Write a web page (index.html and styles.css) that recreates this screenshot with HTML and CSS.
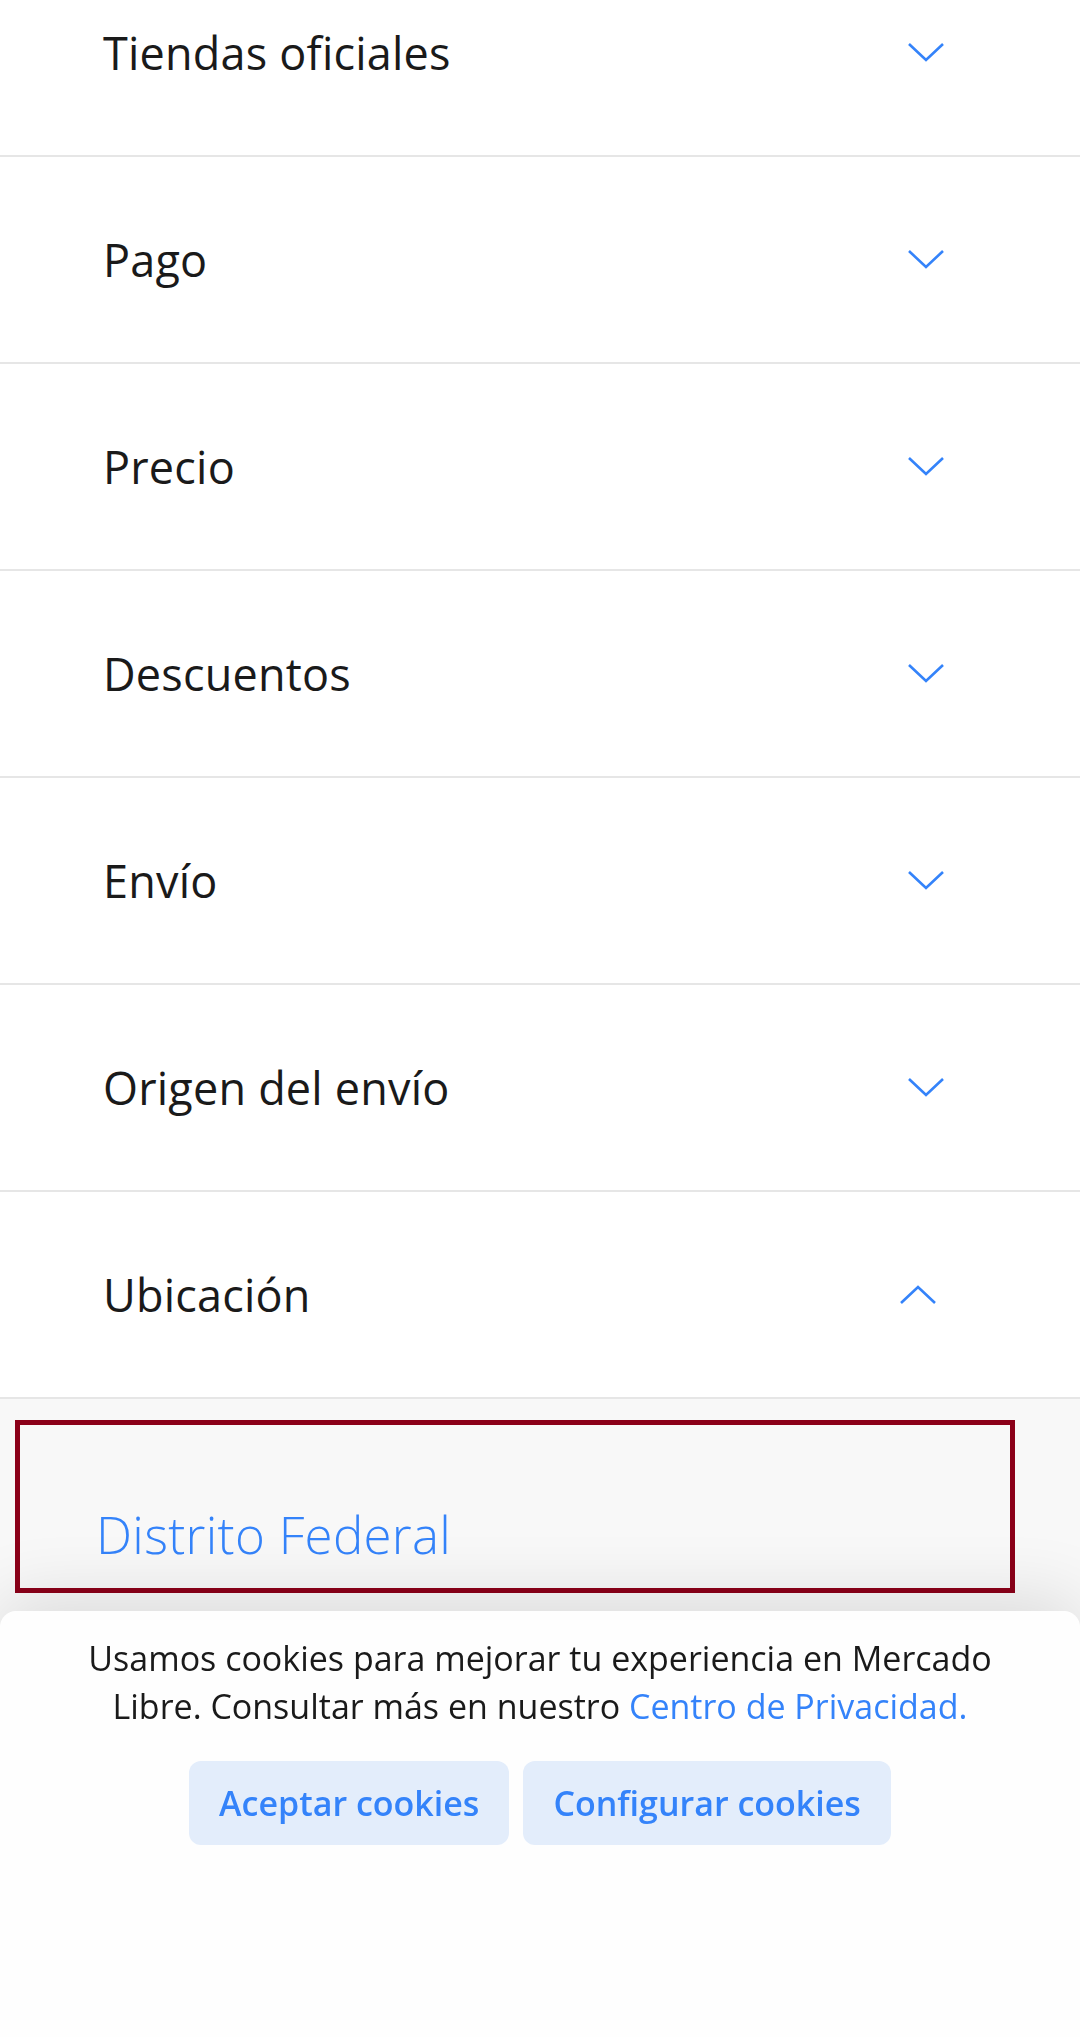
FILE: index.html
```html
<!DOCTYPE html>
<html lang="es">
<head>
<meta charset="utf-8">
<title>Filtros</title>
<link rel="stylesheet" href="styles.css">
</head>
<body>
<main class="filters">
  <div class="filter-row"><span class="label">Tiendas oficiales</span><svg class="chev" viewBox="0 0 36 19"><path d="M1 1 L18 17 L35 1"/></svg></div>
  <div class="filter-row"><span class="label">Pago</span><svg class="chev" viewBox="0 0 36 19"><path d="M1 1 L18 17 L35 1"/></svg></div>
  <div class="filter-row"><span class="label">Precio</span><svg class="chev" viewBox="0 0 36 19"><path d="M1 1 L18 17 L35 1"/></svg></div>
  <div class="filter-row"><span class="label">Descuentos</span><svg class="chev" viewBox="0 0 36 19"><path d="M1 1 L18 17 L35 1"/></svg></div>
  <div class="filter-row"><span class="label">Envío</span><svg class="chev" viewBox="0 0 36 19"><path d="M1 1 L18 17 L35 1"/></svg></div>
  <div class="filter-row"><span class="label">Origen del envío</span><svg class="chev" viewBox="0 0 36 19"><path d="M1 1 L18 17 L35 1"/></svg></div>
  <div class="filter-row"><span class="label">Ubicación</span><svg class="chev chev-up" viewBox="0 0 36 19"><path d="M1 18 L18 2 L35 18"/></svg></div>
  <section class="options">
    <div class="option-box"><a class="option">Distrito Federal</a></div>
  </section>
</main>
<div class="cookie-banner">
  <p class="cookie-text">Usamos cookies para mejorar tu experiencia en Mercado Libre. Consultar más en nuestro <a class="cookie-link">Centro de Privacidad.</a></p>
  <div class="cookie-actions">
    <button class="cookie-btn">Aceptar cookies</button>
    <button class="cookie-btn">Configurar cookies</button>
  </div>
</div>
</body>
</html>
```

FILE: styles.css
```css
* { box-sizing: border-box; }
html, body { margin: 0; padding: 0; }
body {
  background: #f8f8f8;
  font-family: "Open Sans", Lato, sans-serif;
  color: #1a1a1a;
  height: 2037px;
  overflow: hidden;
}
.filters {
  margin-top: -50px;
}
.filter-row {
  height: 207px;
  display: flex;
  align-items: center;
  justify-content: space-between;
  padding: 0 136px 0 103px;
  background: #fff;
  border-bottom: 2px solid #e6e6e6;
}
.label {
  font-size: 45px;
  font-weight: 400;
  letter-spacing: 0.2px;
  color: #1a1a1a;
}
.chev {
  width: 36px;
  height: 19px;
  fill: none;
  stroke: #3483fa;
  stroke-width: 2.6;
}
.chev-up { margin-right: 8px; }
.options {
  padding: 21px 65px 0 15px;
}
.option-box {
  height: 173px;
  border: 5px solid #8b0019;
  padding: 0 0 19px 76px;
  display: flex;
  align-items: flex-end;
}
.option {
  font-size: 51px;
  font-weight: 300;
  letter-spacing: 0.3px;
  color: #3483fa;
}
.cookie-banner {
  position: fixed;
  left: 0;
  right: 0;
  bottom: 0;
  height: 426px;
  background: #fefefe;
  border-radius: 16px 16px 0 0;
  box-shadow: 0 -12px 70px rgba(0, 0, 0, 0.12);
  padding: 23px 50px 0;
  text-align: center;
}
.cookie-text {
  margin: 0;
  font-size: 34px;
  line-height: 48px;
  color: #1a1a1a;
}
.cookie-link { color: #3483fa; }
.cookie-actions {
  display: flex;
  justify-content: center;
  gap: 14px;
  margin-top: 31px;
}
.cookie-btn {
  height: 84px;
  padding: 0 30px;
  border: 0;
  border-radius: 12px;
  background: #e3edfb;
  color: #3483fa;
  font-family: "Open Sans", Lato, sans-serif;
  font-size: 34px;
  font-weight: 600;
}
```
